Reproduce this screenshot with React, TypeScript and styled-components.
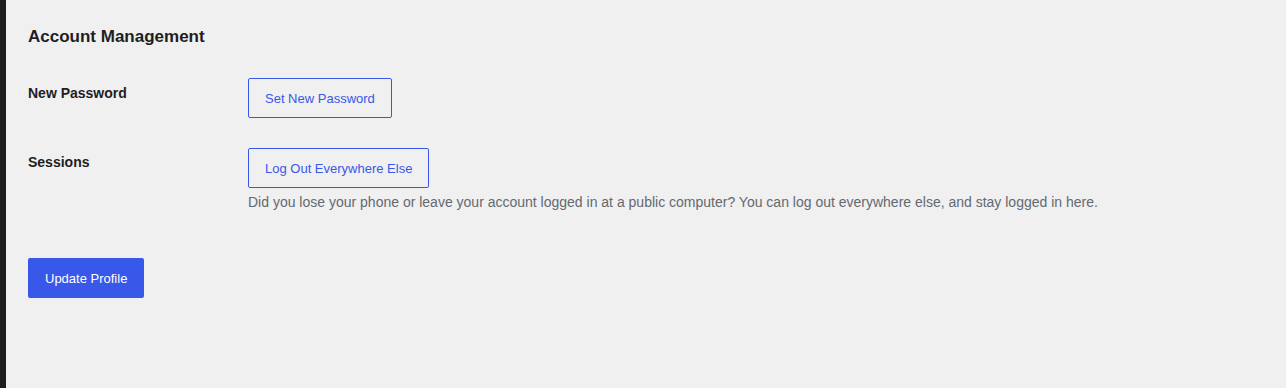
import styled, { createGlobalStyle } from 'styled-components'

const GlobalStyle = createGlobalStyle`
    html, body {
        margin: 0;
        padding: 0;
        background: #f0f0f0;
        font-family: "Liberation Sans", Arial, sans-serif;
    }
`

const Page = styled.div`
    display: flex;
    min-height: 388px;
`

const SideEdge = styled.div`
    width: 6px;
    background: #1d1d1d;
    flex: none;
`

const Content = styled.main`
    flex: 1;
    padding: 27px 22px 0;
`

const Heading = styled.h2`
    margin: 0 0 31px;
    font-size: 17px;
    font-weight: 700;
    color: #1e1e1e;
    line-height: 20px;
`

const Row = styled.div`
    display: grid;
    grid-template-columns: 220px 1fr;
    margin-bottom: 30px;
`

const Label = styled.div<{ $nudge?: number }>`
    font-size: 14px;
    font-weight: 700;
    color: #1e1e1e;
    padding-top: ${p => 6 + (p.$nudge ?? 0)}px;
    line-height: 18px;
`

const Field = styled.div`
    display: flex;
    flex-direction: column;
    align-items: flex-start;
`

const OutlineButton = styled.button`
    height: 40px;
    padding: 0 16px;
    border: 1px solid #3858e9;
    border-radius: 2px;
    background: transparent;
    color: #3858e9;
    font-family: inherit;
    font-size: 13px;
`

const Hint = styled.p`
    margin: 4px 0 0;
    font-size: 14px;
    line-height: 20px;
    color: #646970;
`

const PrimaryButton = styled.button`
    margin-top: 16px;
    height: 40px;
    padding: 0 17px;
    border: none;
    border-radius: 2px;
    background: #3858e9;
    color: #fff;
    font-family: inherit;
    font-size: 13px;
`

export default function App() {
    return (
        <>
            <GlobalStyle />
            <Page>
                <SideEdge />
                <Content>
                    <Heading>Account Management</Heading>
                    <Row>
                        <Label>New Password</Label>
                        <Field>
                            <OutlineButton>Set New Password</OutlineButton>
                        </Field>
                    </Row>
                    <Row>
                        <Label $nudge={-1}>Sessions</Label>
                        <Field>
                            <OutlineButton>Log Out Everywhere Else</OutlineButton>
                            <Hint>
                                Did you lose your phone or leave your account logged in at a public computer? You can log out everywhere else, and stay logged in here.
                            </Hint>
                        </Field>
                    </Row>
                    <PrimaryButton>Update Profile</PrimaryButton>
                </Content>
            </Page>
        </>
    )
}
